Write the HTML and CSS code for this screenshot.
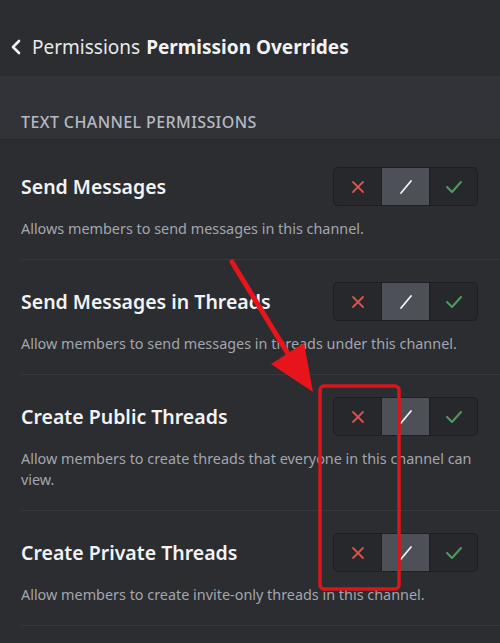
FILE: index.html
```html
<!DOCTYPE html>
<html>
<head>
<meta charset="utf-8">
<link rel="stylesheet" href="styles.css">
</head>
<body>
<div class="app">
  <header class="topbar">
    <svg class="back" width="12" height="16" viewBox="0 0 12 16"><path d="M9 2 L3 8 L9 14" fill="none" stroke="#f2f3f5" stroke-width="2.6" stroke-linecap="round" stroke-linejoin="round"/></svg>
    <span class="crumb">Permissions</span>
    <span class="title">Permission Overrides</span>
  </header>
  <div class="section-head">TEXT CHANNEL PERMISSIONS</div>
  <div class="list">
    <div class="row">
      <div class="row-top">
        <div class="name">Send Messages</div>
        <div class="seg">
          <div class="opt"><svg width="14" height="14" viewBox="0 0 14 14"><path d="M2 2 L12 12 M12 2 L2 12" stroke="#d9534f" stroke-width="1.8" stroke-linecap="round"/></svg></div>
          <div class="opt mid"><svg width="16" height="16" viewBox="0 0 16 16"><path d="M3 14 L13 2" stroke="#f2f3f5" stroke-width="1.8" stroke-linecap="round"/></svg></div>
          <div class="opt"><svg width="18" height="14" viewBox="0 0 18 14"><path d="M2 7 L7 12 L16 2" fill="none" stroke="#4f9a5f" stroke-width="2" stroke-linecap="round" stroke-linejoin="round"/></svg></div>
        </div>
      </div>
      <div class="desc">Allows members to send messages in this channel.</div>
    </div>
    <div class="row">
      <div class="row-top">
        <div class="name">Send Messages in Threads</div>
        <div class="seg">
          <div class="opt"><svg width="14" height="14" viewBox="0 0 14 14"><path d="M2 2 L12 12 M12 2 L2 12" stroke="#d9534f" stroke-width="1.8" stroke-linecap="round"/></svg></div>
          <div class="opt mid"><svg width="16" height="16" viewBox="0 0 16 16"><path d="M3 14 L13 2" stroke="#f2f3f5" stroke-width="1.8" stroke-linecap="round"/></svg></div>
          <div class="opt"><svg width="18" height="14" viewBox="0 0 18 14"><path d="M2 7 L7 12 L16 2" fill="none" stroke="#4f9a5f" stroke-width="2" stroke-linecap="round" stroke-linejoin="round"/></svg></div>
        </div>
      </div>
      <div class="desc">Allow members to send messages in threads under this channel.</div>
    </div>
    <div class="row">
      <div class="row-top">
        <div class="name">Create Public Threads</div>
        <div class="seg">
          <div class="opt"><svg width="14" height="14" viewBox="0 0 14 14"><path d="M2 2 L12 12 M12 2 L2 12" stroke="#d9534f" stroke-width="1.8" stroke-linecap="round"/></svg></div>
          <div class="opt mid"><svg width="16" height="16" viewBox="0 0 16 16"><path d="M3 14 L13 2" stroke="#f2f3f5" stroke-width="1.8" stroke-linecap="round"/></svg></div>
          <div class="opt"><svg width="18" height="14" viewBox="0 0 18 14"><path d="M2 7 L7 12 L16 2" fill="none" stroke="#4f9a5f" stroke-width="2" stroke-linecap="round" stroke-linejoin="round"/></svg></div>
        </div>
      </div>
      <div class="desc">Allow members to create threads that everyone in this channel can view.</div>
    </div>
    <div class="row">
      <div class="row-top">
        <div class="name">Create Private Threads</div>
        <div class="seg">
          <div class="opt"><svg width="14" height="14" viewBox="0 0 14 14"><path d="M2 2 L12 12 M12 2 L2 12" stroke="#d9534f" stroke-width="1.8" stroke-linecap="round"/></svg></div>
          <div class="opt mid"><svg width="16" height="16" viewBox="0 0 16 16"><path d="M3 14 L13 2" stroke="#f2f3f5" stroke-width="1.8" stroke-linecap="round"/></svg></div>
          <div class="opt"><svg width="18" height="14" viewBox="0 0 18 14"><path d="M2 7 L7 12 L16 2" fill="none" stroke="#4f9a5f" stroke-width="2" stroke-linecap="round" stroke-linejoin="round"/></svg></div>
        </div>
      </div>
      <div class="desc">Allow members to create invite-only threads in this channel.</div>
    </div>
  </div>
  <svg class="annot" width="500" height="643" viewBox="0 0 500 643">
    <line x1="232" y1="262" x2="293" y2="362" stroke="#e8141b" stroke-width="5" stroke-linecap="round"/>
    <polygon points="313,392 271,364 304,343" fill="#e8141b"/>
    <rect x="320" y="386" width="79" height="203" rx="4" fill="none" stroke="#d8161c" stroke-width="3.5"/>
  </svg>
</div>
</body>
</html>
```

FILE: styles.css
```css
* { box-sizing: border-box; }
html, body { margin: 0; padding: 0; }
body {
  background: #2b2d31;
  font-family: "Noto Sans", "Open Sans", sans-serif;
  width: 500px;
  height: 643px;
  overflow: hidden;
}
.app { position: relative; width: 500px; height: 643px; }
.topbar {
  height: 76px;
  background: #2b2d31;
  display: flex;
  align-items: center;
  padding: 18px 0 0 10px;
  color: #f2f3f5;
  font-size: 19px;
}
.back { margin-right: 10px; }
.crumb { font-weight: 400; margin-right: 6px; color: #e8e9eb; }
.title { font-weight: 700; }
.section-head {
  height: 64px;
  background: #323338;
  color: #b5bac1;
  font-size: 16px;
  font-weight: 500;
  letter-spacing: 0.4px;
  padding: 35px 0 0 21px;
  border-bottom: 1px solid #26272b;
}
.list { padding-top: 5px; }
.row {
  margin-left: 21px;
  padding: 22px 22px 20px 0;
  border-bottom: 1px solid #37383d;
}
.row-top {
  display: flex;
  align-items: center;
  justify-content: space-between;
  height: 39px;
}
.name {
  color: #f2f3f5;
  font-size: 19.5px;
  font-weight: 600;
}
.seg {
  display: flex;
  width: 145px;
  height: 39px;
  border: 1px solid #1e1f22;
  border-radius: 5px;
  overflow: hidden;
  background: #27282c;
}
.opt {
  flex: 1;
  display: flex;
  align-items: center;
  justify-content: center;
  border-right: 1px solid #1e1f22;
}
.opt:last-child { border-right: none; }
.opt.mid { background: #4e5058; }
.desc {
  margin-top: 12px;
  margin-right: -14px;
  color: #a3a6ad;
  font-size: 14.4px;
  line-height: 21px;
}
.annot { position: absolute; left: 0; top: 0; pointer-events: none; }
```
